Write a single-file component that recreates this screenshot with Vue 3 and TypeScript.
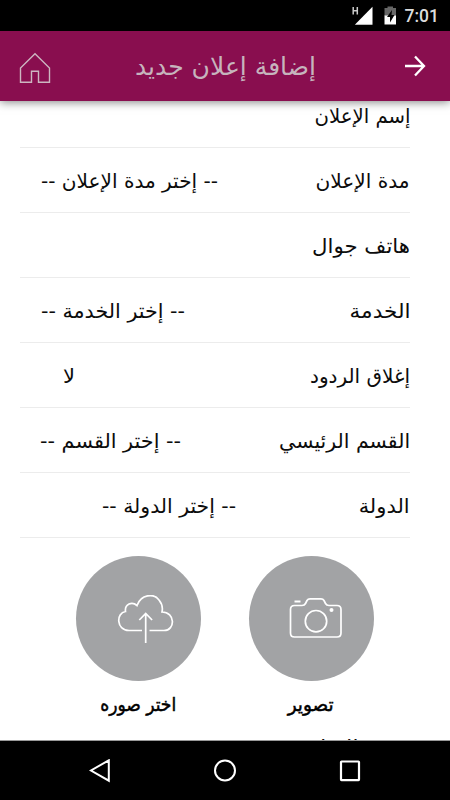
<script setup lang="ts">
import type { Directive } from 'vue'

interface Field {
  label: string
  labelWidth: number
  value?: string
  valueWidth?: number
  indent?: number
}

const fields: Field[] = [
  { label: 'إسم الإعلان', labelWidth: 96 },
  { label: 'مدة الإعلان', labelWidth: 94, value: '-- إختر مدة الإعلان --', valueWidth: 177, indent: 21 },
  { label: 'هاتف جوال', labelWidth: 98 },
  { label: 'الخدمة', labelWidth: 61, value: '-- إختر الخدمة --', valueWidth: 144, indent: 21 },
  { label: 'إغلاق الردود', labelWidth: 100, value: 'لا', valueWidth: 12, indent: 43 },
  { label: 'القسم الرئيسي', labelWidth: 131, value: '-- إختر القسم --', valueWidth: 141, indent: 20 },
  { label: 'الدولة', labelWidth: 51, value: '-- إختر الدولة --', valueWidth: 134, indent: 82 },
]

// Condenses or widens a single line of text to the given width.
const vFit: Directive<HTMLElement, number> = {
  mounted(el, { value }) {
    const natural = el.getBoundingClientRect().width
    el.style.setProperty('--fit', String(value / natural))
  },
}
</script>

<template>
  <div class="screen">
    <div class="status">
      <svg class="signal" width="22" height="19" viewBox="0 0 22 19">
        <path d="M20.500 .8v18H2.800z" fill="#fff" />
        <path d="M1.200 1v7.500M5.300 1v7.500M1 4.700h4.500" stroke="#ccc" stroke-width="1.500" fill="none" />
      </svg>
      <svg class="battery" width="13" height="19" viewBox="0 0 13 19">
        <path d="M.5 2h3V.500h5.500V2h3v8H.500z" fill="#666" />
        <path d="M.5 9.500h11.500v9H.500z" fill="#fff" />
        <path d="M8 4 3 11h3v5.500L10.500 9H7.500z" fill="#000" />
      </svg>
      <span class="clock">7:01</span>
    </div>

    <header class="bar">
      <svg width="32" height="32" viewBox="0 0 32 32" fill="none" stroke="#cdb6c1" stroke-width="1.400">
        <path d="M1.500 30.300V16L16 1.700 30.500 16v14.300H19.500V19.200h-7v11.100z" />
      </svg>
      <h1><span v-fit="181" class="fit">إضافة إعلان جديد</span></h1>
      <svg class="back" width="22" height="22" viewBox="0 0 22 22" fill="none" stroke="#fff" stroke-width="2.300">
        <path d="M1 11h19M11 1.500 20 11l-9 9.500" />
      </svg>
    </header>

    <main class="content">
      <div class="fields">
        <div v-for="f in fields" :key="f.label" class="field">
          <span v-fit="f.labelWidth" class="fit right">{{ f.label }}</span>
          <span v-if="f.value" class="value" :style="{ marginLeft: `${f.indent ?? 0}px` }">
            <span v-fit="f.valueWidth ?? 0" class="fit left">{{ f.value }}</span>
          </span>
        </div>
      </div>

      <div class="photos">
        <button class="photo" type="button">
          <span class="disc">
            <svg width="58" height="50" viewBox="0 0 58 50" fill="none" stroke="#fff" stroke-width="1.700">
              <path d="M25 35.500H12C-1 35 -1 18 8.500 16.500 7.500 9 15 6 20 10.500 24-1 37-2 42 5q4.500 5.500 3 12C58.500 17 58.500 35.500 47 35.500H32.500" />
              <path d="M28.700 48V18.500M22.300 25l6.400-6.500 6.400 6.500" />
            </svg>
          </span>
          <span v-fit="76" class="fit caption">اختر صوره</span>
        </button>
        <button class="photo" type="button">
          <span class="disc">
            <svg class="camera" width="54" height="42" viewBox="0 0 54 42" fill="none" stroke="#fff" stroke-width="1.700">
              <path d="M5.500 8.500H13q2.500 0 3.500-2l1.500-3q1-1.700 3-1.700h11q2 0 3 1.700l1.500 3q1 2 3.500 2h8q4 0 4 4V36q0 4-4 4H5.500q-4 0-4-4V12.500q0-4 4-4z" />
              <circle cx="27" cy="24.200" r="10.700" />
              <path d="M5.500 4.500H11.500" stroke-width="2" />
              <circle cx="42.500" cy="13" r="2" fill="#fff" stroke="none" />
            </svg>
          </span>
          <span v-fit="46" class="fit caption">تصوير</span>
        </button>
      </div>

      <div class="field last">
        <span v-fit="112" class="fit right">موقع الإعلان</span>
      </div>
    </main>

    <nav class="nav">
      <svg width="22" height="24" viewBox="0 0 22 24" fill="none" stroke="#fff" stroke-width="2">
        <path d="M19.800 1.300v20.400L2 11.500z" />
      </svg>
      <svg width="24" height="24" viewBox="0 0 24 24" fill="none" stroke="#fff" stroke-width="2">
        <circle cx="12" cy="11.500" r="10" />
      </svg>
      <svg width="22" height="24" viewBox="0 0 22 24" fill="none" stroke="#fff" stroke-width="2.200">
        <rect x="2" y="2.500" width="18" height="18.600" rx=".5" />
      </svg>
    </nav>
  </div>
</template>

<style>
body { margin: 0; }
</style>

<style scoped>
.screen {
  width: 450px;
  height: 800px;
  display: flex;
  flex-direction: column;
  overflow: hidden;
  background: #fff;
  color: #0c0c0c;
  font-family: "DejaVu Sans", sans-serif;
}
svg { display: block; flex: none; }
.status {
  box-sizing: border-box;
  height: 31px;
  display: flex;
  align-items: flex-start;
  justify-content: flex-end;
  padding: 6px 11px 0 0;
  background: #000;
}
.battery { margin: 0 8px 0 10px; }
.clock {
  color: #ddd;
  font: 500 17.500px/21px Roboto, sans-serif;
}
.bar {
  box-sizing: border-box;
  position: relative;
  height: 70px;
  flex: none;
  display: flex;
  align-items: center;
  justify-content: space-between;
  padding: 3px 24px 0 19px;
  background: #890e4f;
  box-shadow: 0 1px 9px rgba(0, 0, 0, .5);
}
.bar h1 {
  margin: -2px 5px 0 0;
  width: 181px;
  display: flex;
  justify-content: center;
  color: #c6b4bd;
  font-size: 25px;
  font-weight: 400;
  line-height: 60px;
  direction: rtl;
}
.back { margin-top: -3px; }
.content { flex: 1; min-height: 0; overflow: hidden; border-bottom: 1px solid #999; }
.fields { margin-top: -18px; }
.field {
  height: 64px;
  display: flex;
  justify-content: space-between;
  direction: rtl;
  margin: 0 40px 0 20px;
  border-bottom: 1px solid #ececec;
  font-size: 20px;
  line-height: 66px;
}
.fit { display: inline-block; flex: none; white-space: nowrap; transform: scaleX(var(--fit, 1)); }
.right { transform-origin: right; }
.left { transform-origin: left; }
.photos {
  display: flex;
  gap: 47.500px;
  padding: 18px 0 0 76px;
}
.photo {
  width: 125px;
  display: flex;
  flex-direction: column;
  align-items: center;
  padding: 0;
  border: 0;
  background: none;
  color: #000;
  font: 19px/24px "DejaVu Sans", sans-serif;
}
.disc {
  box-sizing: border-box;
  width: 125px;
  height: 125px;
  display: flex;
  padding: 39px 0 0 40.500px;
  border-radius: 50%;
  background: #a2a3a5;
}
.camera { margin-top: 2px; }
.caption { margin-top: 11px; direction: rtl; -webkit-text-stroke: .5px #000; }
.last { margin-top: -2px; }
.nav {
  height: 59px;
  flex: none;
  display: flex;
  align-items: center;
  justify-content: space-between;
  padding: 0 89px;
  background: #000;
}
</style>
